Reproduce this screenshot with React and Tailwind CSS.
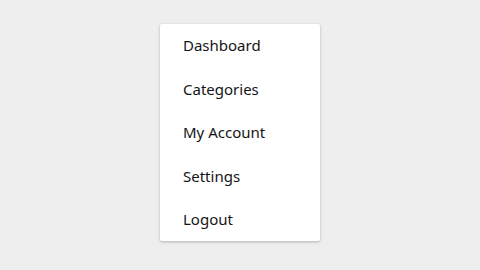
import React from 'react'

const items = ['Dashboard', 'Categories', 'My Account', 'Settings', 'Logout']

const App = () => {
  return (
    <div className="w-[480px] h-[270px] bg-[#efeeef] flex justify-center pt-[24px] font-['Noto_Sans',sans-serif]">
      <ul className="w-[160px] h-[217px] bg-white rounded-[2px] shadow-[0_1px_3px_rgba(0,0,0,0.25)] flex flex-col">
        {items.map((item) => (
          <li key={item} className="flex-1 flex items-center pl-[23px] text-[15px] text-[#151515]">
            {item}
          </li>
        ))}
      </ul>
    </div>
  )
}

export default App
